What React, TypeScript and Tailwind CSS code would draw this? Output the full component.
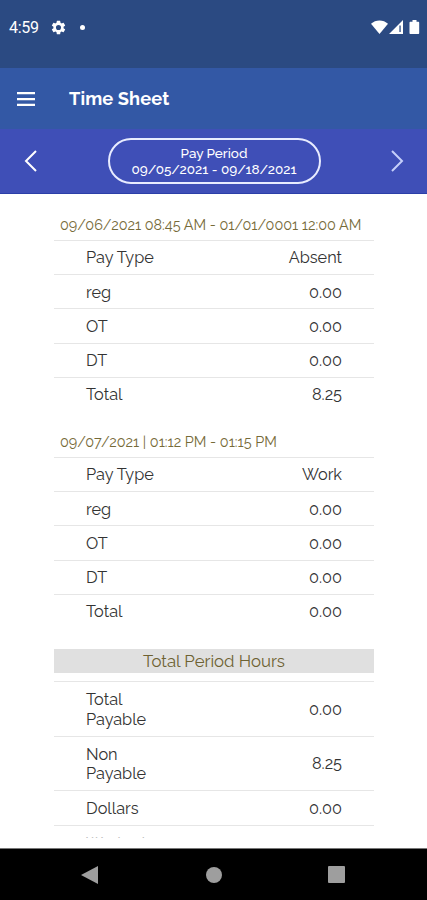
import { FC } from 'react';

type Row = { label: string; value: string };

const firstEntry: Row[] = [
  { label: 'Pay Type', value: 'Absent' },
  { label: 'reg', value: '0.00' },
  { label: 'OT', value: '0.00' },
  { label: 'DT', value: '0.00' },
  { label: 'Total', value: '8.25' },
];

const secondEntry: Row[] = [
  { label: 'Pay Type', value: 'Work' },
  { label: 'reg', value: '0.00' },
  { label: 'OT', value: '0.00' },
  { label: 'DT', value: '0.00' },
  { label: 'Total', value: '0.00' },
];

const StatusBar: FC = () => (
  <div className="flex h-[68px] items-start justify-between bg-[#2b4a82] pl-[9px] pr-[7px] text-white">
    <div className="flex h-[55px] items-center">
      <span className="w-[41px] pt-px font-['Roboto',sans-serif] text-[16px] font-normal tracking-[-0.3px]">4:59</span>
      <svg className="h-[17px] w-[17px]" viewBox="0 0 24 24" fill="currentColor">
        <path d="M19.14 12.94c.04-.3.06-.61.06-.94 0-.32-.02-.64-.07-.94l2.03-1.58a.49.49 0 0 0 .12-.61l-1.92-3.32a.49.49 0 0 0-.59-.22l-2.39.96c-.5-.38-1.03-.7-1.62-.94l-.36-2.54a.48.48 0 0 0-.48-.41h-3.84a.47.47 0 0 0-.47.41l-.36 2.54c-.59.24-1.13.57-1.62.94l-2.39-.96a.49.49 0 0 0-.59.22L2.74 8.87a.47.47 0 0 0 .12.61l2.03 1.58c-.05.3-.09.63-.09.94s.02.64.07.94l-2.03 1.58a.49.49 0 0 0-.12.61l1.92 3.32c.12.22.37.29.59.22l2.39-.96c.5.38 1.03.7 1.62.94l.36 2.54c.05.24.24.41.48.41h3.84c.24 0 .44-.17.47-.41l.36-2.54c.59-.24 1.13-.56 1.62-.94l2.39.96c.22.08.47 0 .59-.22l1.92-3.32a.47.47 0 0 0-.12-.61l-2.01-1.58zM12 15.6a3.6 3.6 0 1 1 0-7.2 3.6 3.6 0 0 1 0 7.2z" />
      </svg>
      <span className="ml-[13px] h-[5px] w-[5px] rounded-full bg-white" />
    </div>
    <div className="flex h-[54px] items-center">
      <svg className="h-[14px] w-[49px]" viewBox="0 0 49 14" fill="currentColor">
        <path d="M0 3.8C4.6-.7 12.4-.7 17 3.8L8.5 14z" />
        <path fillRule="evenodd" d="M18 14 32 0v14zM28.4 5.5v6.5h1.3V5.5z" />
        <path d="M39.5 1.7h2V0h4v1.7h1.7c.6 0 1 .4 1 1V13c0 .6-.4 1-1 1h-7.7c-.6 0-1-.4-1-1V2.7c0-.6.4-1 1-1z" />
      </svg>
    </div>
  </div>
);

const Header: FC = () => (
  <header className="flex h-[61px] items-center bg-[#3358a5] pl-[17px] text-white">
    <svg className="h-[14px] w-[18px]" viewBox="0 0 18 14" fill="currentColor">
      <path d="M0 0h18v2.3H0zM0 5.9h18v2.3H0zM0 11.7h18V14H0z" />
    </svg>
    <h1 className="ml-[34px] text-[18.3px] font-bold tracking-[0.1px]">Time Sheet</h1>
  </header>
);

const PayPeriod: FC = () => (
  <div className="flex h-[65px] items-center justify-between border-b border-[#2b3fa8] bg-[#3f4fb7] pl-[24px] pr-[23px] text-white">
    <svg className="h-[22px] w-[13px]" viewBox="0 0 13 22" fill="none" stroke="currentColor" strokeWidth="2">
      <path d="M12 1 2 11l10 10" />
    </svg>
    <div className="flex h-[46px] w-[213px] flex-col items-center justify-center rounded-[23px] border-2 border-[#e8ecff] pb-px text-[13.5px] leading-[16px] font-medium">
      <span>Pay Period</span>
      <span>09/05/2021 - 09/18/2021</span>
    </div>
    <svg className="h-[22px] w-[13px] text-[#c5cffa]" viewBox="0 0 13 22" fill="none" stroke="currentColor" strokeWidth="2">
      <path d="m1 1 10 10L1 21" />
    </svg>
  </div>
);

const EntryTable: FC<{ title: string; rows: Row[] }> = ({ title, rows }) => (
  <section className="mb-[13px]">
    <h2 className="flex h-[33px] items-center pt-[2px] pl-[6px] text-[14.4px] whitespace-nowrap text-[#766a38]">
      {title}
    </h2>
    {rows.map((row) => (
      <div
        key={row.label}
        className="flex h-[34.2px] items-center justify-between border-t border-[#e6e6e6] px-[32px] pt-[2px]"
      >
        <span>{row.label}</span>
        <span>{row.value}</span>
      </div>
    ))}
  </section>
);

const App: FC = () => (
  <div className="flex h-[900px] w-[427px] flex-col overflow-hidden bg-white font-['Raleway','Lato',sans-serif] text-[16.3px] font-normal text-[#333]">
    <StatusBar />
    <Header />
    <PayPeriod />

    {/* Scrolling list, clipped above the navigation bar */}
    <main className="h-[645px] overflow-hidden pr-[53px] pl-[54px] pt-[13px]">
      <EntryTable title="09/06/2021 08:45 AM - 01/01/0001 12:00 AM" rows={firstEntry} />
      <EntryTable title="09/07/2021 | 01:12 PM - 01:15 PM" rows={secondEntry} />

      <section className="pt-[8.5px]">
        <h2 className="mb-[8px] flex h-[24px] items-center justify-center bg-[#e0e0e0] text-[16.8px] text-[#6e6232]">
          Total Period Hours
        </h2>
        <div className="flex h-[54.5px] items-center justify-between border-t border-[#e6e6e6] px-[32px] pt-px leading-[19.5px]">
          <span className="w-[70px]">Total Payable</span>
          <span>0.00</span>
        </div>
        <div className="flex h-[54.5px] items-center justify-between border-t border-[#e6e6e6] px-[32px] pt-px leading-[19.5px]">
          <span className="w-[70px]">Non Payable</span>
          <span>8.25</span>
        </div>
        <div className="flex h-[35px] items-center justify-between border-t border-[#e6e6e6] px-[32px] pt-px">
          <span>Dollars</span>
          <span>0.00</span>
        </div>
        <div className="h-[13px] overflow-hidden border-t border-[#e6e6e6] px-[32px] pt-[6px] text-[#bbb]">
          <span>Worked</span>
        </div>
      </section>
    </main>

    <nav className="mt-auto flex h-[52px] items-center justify-between border-t border-[#777] bg-black pr-[82px] pl-[81px]">
      <svg className="h-[18px] w-[17px]" viewBox="0 0 17 18" fill="#9e9e9e">
        <path d="M17 0v18L0 9z" />
      </svg>
      <span className="ml-px h-[16px] w-[16px] rounded-full bg-[#9e9e9e]" />
      <span className="h-[17px] w-[17px] rounded-[1px] bg-[#9e9e9e]" />
    </nav>
  </div>
);

export default App;
